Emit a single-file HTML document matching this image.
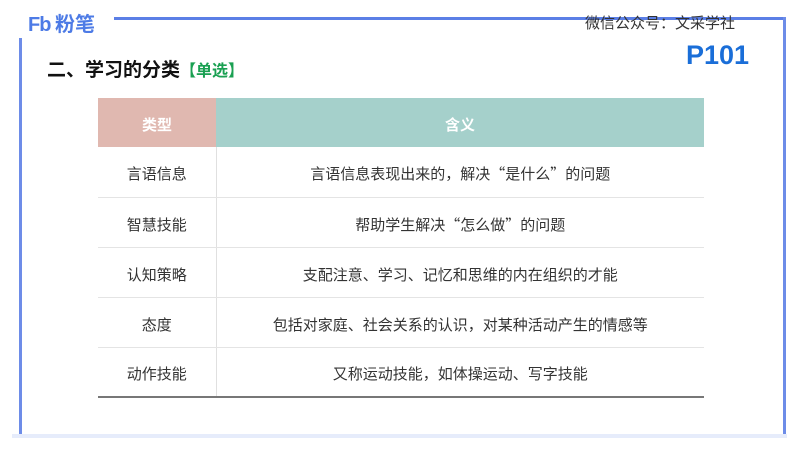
<!DOCTYPE html>
<html><head><meta charset="utf-8"><style>
*{margin:0;padding:0;box-sizing:border-box}
body{width:800px;height:450px;background:#fff;position:relative;overflow:hidden;font-family:"Liberation Sans","Noto Sans CJK SC",sans-serif}
.a{position:absolute}
table{position:absolute;left:98px;top:98px;width:606px;border-collapse:collapse;font-size:15px;color:#333;font-family:"Noto Sans CJK SC",sans-serif}
td{height:50px;text-align:center;border-bottom:1.5px solid #e4e4e4;padding-top:4px}
td.c1{width:118px;border-right:1px solid #e0e0e0}
tr.h td{height:49px;color:#fff;font-weight:bold;border:none}
tr:last-child td{border-bottom:2px solid #777}
</style></head><body>
<div class="a" style="left:114px;top:17px;width:671px;height:3px;background:#5b7fe6"></div>
<div class="a" style="left:783px;top:17px;width:3px;height:420px;background:#6d8ce8"></div>
<div class="a" style="left:19px;top:38px;width:3px;height:398px;background:#6d8ce8"></div>
<div class="a" style="left:12px;top:434px;width:775px;height:4px;background:#e6ecfb"></div>
<div class="a" style="left:28px;top:8px;font-size:20px;font-weight:bold;color:#4d7be6;letter-spacing:-1px">Fb<span style="font-family:'Noto Sans CJK SC',sans-serif;letter-spacing:0"> 粉笔</span></div>
<div class="a" style="left:585px;top:12px;font-size:15px;color:#333;font-family:'Noto Sans CJK SC',sans-serif">微信公众号：文采学社</div>
<div class="a" style="left:686px;top:40px;font-size:27px;font-weight:bold;color:#1a6ed8">P101</div>
<div class="a" style="left:47px;top:55px;font-size:19px;font-weight:bold;color:#111">二、学习的分类<span style="color:#1aa052;font-size:16px">【单选】</span></div>
<table>
<tr class="h"><td class="c1" style="background:#e0b8b0">类型</td><td style="background:#a5d0cb">含义</td></tr>
<tr><td class="c1">言语信息</td><td>言语信息表现出来的，解决“是什么”的问题</td></tr>
<tr><td class="c1">智慧技能</td><td>帮助学生解决“怎么做”的问题</td></tr>
<tr><td class="c1">认知策略</td><td>支配注意、学习、记忆和思维的内在组织的才能</td></tr>
<tr><td class="c1">态度</td><td>包括对家庭、社会关系的认识，对某种活动产生的情感等</td></tr>
<tr><td class="c1">动作技能</td><td>又称运动技能，如体操运动、写字技能</td></tr>
</table>
</body></html>
